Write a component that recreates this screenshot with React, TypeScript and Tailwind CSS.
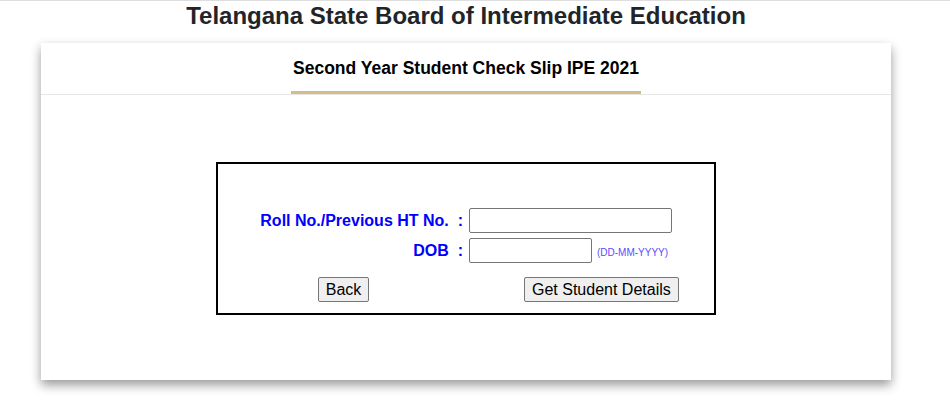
export default function App() {
  return (
    <div className="min-h-[408px] w-[950px] bg-white font-['Liberation_Sans',Arial,sans-serif]">
      <div className="h-px w-full bg-[#dedede]" />
      <div className="w-[932px]">
        <h1 className="pt-[1px] text-center text-[24px] font-bold leading-[28px] text-[#212529]">
          Telangana State Board of Intermediate Education
        </h1>
        <div className="mx-auto mt-[13px] w-[850px] bg-white shadow-[0_5px_10px_rgba(0,0,0,0.4)]">
          <div className="flex justify-center border-b border-[#e6e6e6]">
            <div className="w-[350px] border-b-[3px] border-[#d5bb85] pb-[13px] pt-[15px] text-center text-[17.5px] font-bold leading-[20px] text-black">
              Second Year Student Check Slip IPE 2021
            </div>
          </div>
          <div className="pb-[65px] pt-[67px]">
            <CheckForm />
          </div>
        </div>
      </div>
    </div>
  );
}

function CheckForm() {
  return (
    <div className="ml-[175px] w-[500px] border-2 border-black pb-[11px] pt-[44px]">
      <div className="grid grid-cols-[251px_1fr] gap-y-[5px] text-[16px]">
        <label className="flex items-center justify-end pr-[6px] font-bold text-[#0000ff]">
          Roll No./Previous HT No.&nbsp;&nbsp;:
        </label>
        <input className="h-[25px] w-[203px] rounded-[2px] border border-[#767676] bg-white px-1" />
        <label className="flex items-center justify-end pr-[6px] font-bold text-[#0000ff]">
          DOB&nbsp;&nbsp;:
        </label>
        <div className="flex items-end gap-[5px]">
          <input className="h-[25px] w-[123px] rounded-[2px] border border-[#767676] bg-white px-1" />
          <span className="pb-[4px] text-[10px] leading-[12px] text-[#5a4bff]">(DD-MM-YYYY)</span>
        </div>
      </div>
      <div className="mt-[14px] flex">
        <div className="flex w-[251px] justify-center">
          <Btn>Back</Btn>
        </div>
        <div className="pl-[55px]">
          <Btn>Get Student Details</Btn>
        </div>
      </div>
    </div>
  );
}

function Btn({ children }: { children: React.ReactNode }) {
  return (
    <button className="h-[25px] rounded-[2px] border border-[#767676] bg-[#efefef] px-[7px] text-[16px] leading-[20px] text-black">
      {children}
    </button>
  );
}
